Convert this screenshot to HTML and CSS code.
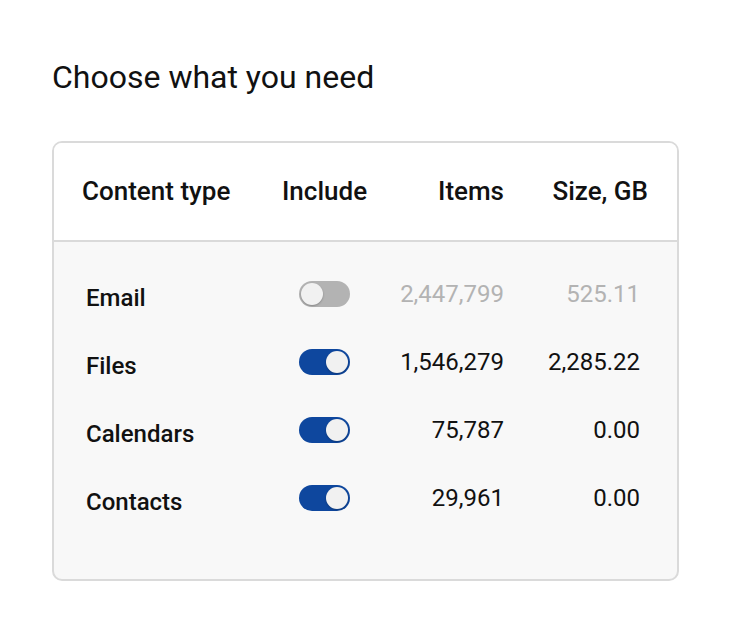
FILE: index.html
```html
<!DOCTYPE html>
<html lang="en">
<head>
    <meta charset="UTF-8">
    <title>Choose what you need</title>
    <link rel="stylesheet" href="styles.css">
</head>
<body>
<div class="page">
    <h1 class="title">Choose what you need</h1>

    <div class="table">
        <div class="row head">
            <span class="name">Content type</span>
            <span class="inc">Include</span>
            <span class="num">Items</span>
            <span class="num size">Size, GB</span>
        </div>

        <div class="body">
            <div class="row off">
                <span class="name">Email</span>
                <span class="inc"><span class="toggle"></span></span>
                <span class="num">2,447,799</span>
                <span class="num size">525.11</span>
            </div>
            <div class="row">
                <span class="name">Files</span>
                <span class="inc"><span class="toggle on"></span></span>
                <span class="num">1,546,279</span>
                <span class="num size">2,285.22</span>
            </div>
            <div class="row">
                <span class="name">Calendars</span>
                <span class="inc"><span class="toggle on"></span></span>
                <span class="num">75,787</span>
                <span class="num size">0.00</span>
            </div>
            <div class="row">
                <span class="name">Contacts</span>
                <span class="inc"><span class="toggle on"></span></span>
                <span class="num">29,961</span>
                <span class="num size">0.00</span>
            </div>
        </div>
    </div>
</div>
</body>
</html>
```

FILE: styles.css
```css
*{
    margin:0;
    padding:0;
    box-sizing: border-box;
}
body{
    background: #fff;
    font-family: Roboto, "Liberation Sans", sans-serif;
    color: #111;
}
.page{
    width:730px;
    height:630px;
    padding:58px 51px 0 52px;
}
.title{
    font-size:32px;
    font-weight:400;
    line-height:38px;
    margin-bottom:45px;
}

.table{
    width:627px;
    height:440px;
    border:2px solid #dadada;
    border-radius:10px;
    overflow: hidden;
    background: #f8f8f8;
}
.row{
    display: grid;
    grid-template-columns: 228px 110px 112px 144px;
    align-items: center;
}
.head{
    height:99px;
    background: #fff;
    border-bottom:2px solid #dadada;
    font-size:26px;
    font-weight:500;
    padding-bottom:2px;
}
.head .name{
    padding-left:28px;
}

.body{
    padding-top:18px;
}
.body .row{
    height:68px;
    font-size:24px;
}
.body .name{
    font-weight:500;
    padding-left:32px;
    padding-top:8px;
}
.body .inc{
    padding-left:17px;
}
.num{
    text-align: right;
}
.body .size{
    padding-right:8px;
}
.off .num{
    color: #b3b3b3;
}

/* switch: track with a round knob */
.toggle{
    display: block;
    position: relative;
    width:51px;
    height:26px;
    border-radius:13px;
    background: #b3b3b3;
}
.toggle::after{
    content: "";
    position: absolute;
    top:2px;
    left:2px;
    width:22px;
    height:22px;
    border-radius:50%;
    background: #f1f1f1;
    box-shadow: 0 1px 2px rgba(0,0,0,.25);
}
.toggle.on{
    background: #0e479e;
}
.toggle.on::after{
    left:27px;
}
```
